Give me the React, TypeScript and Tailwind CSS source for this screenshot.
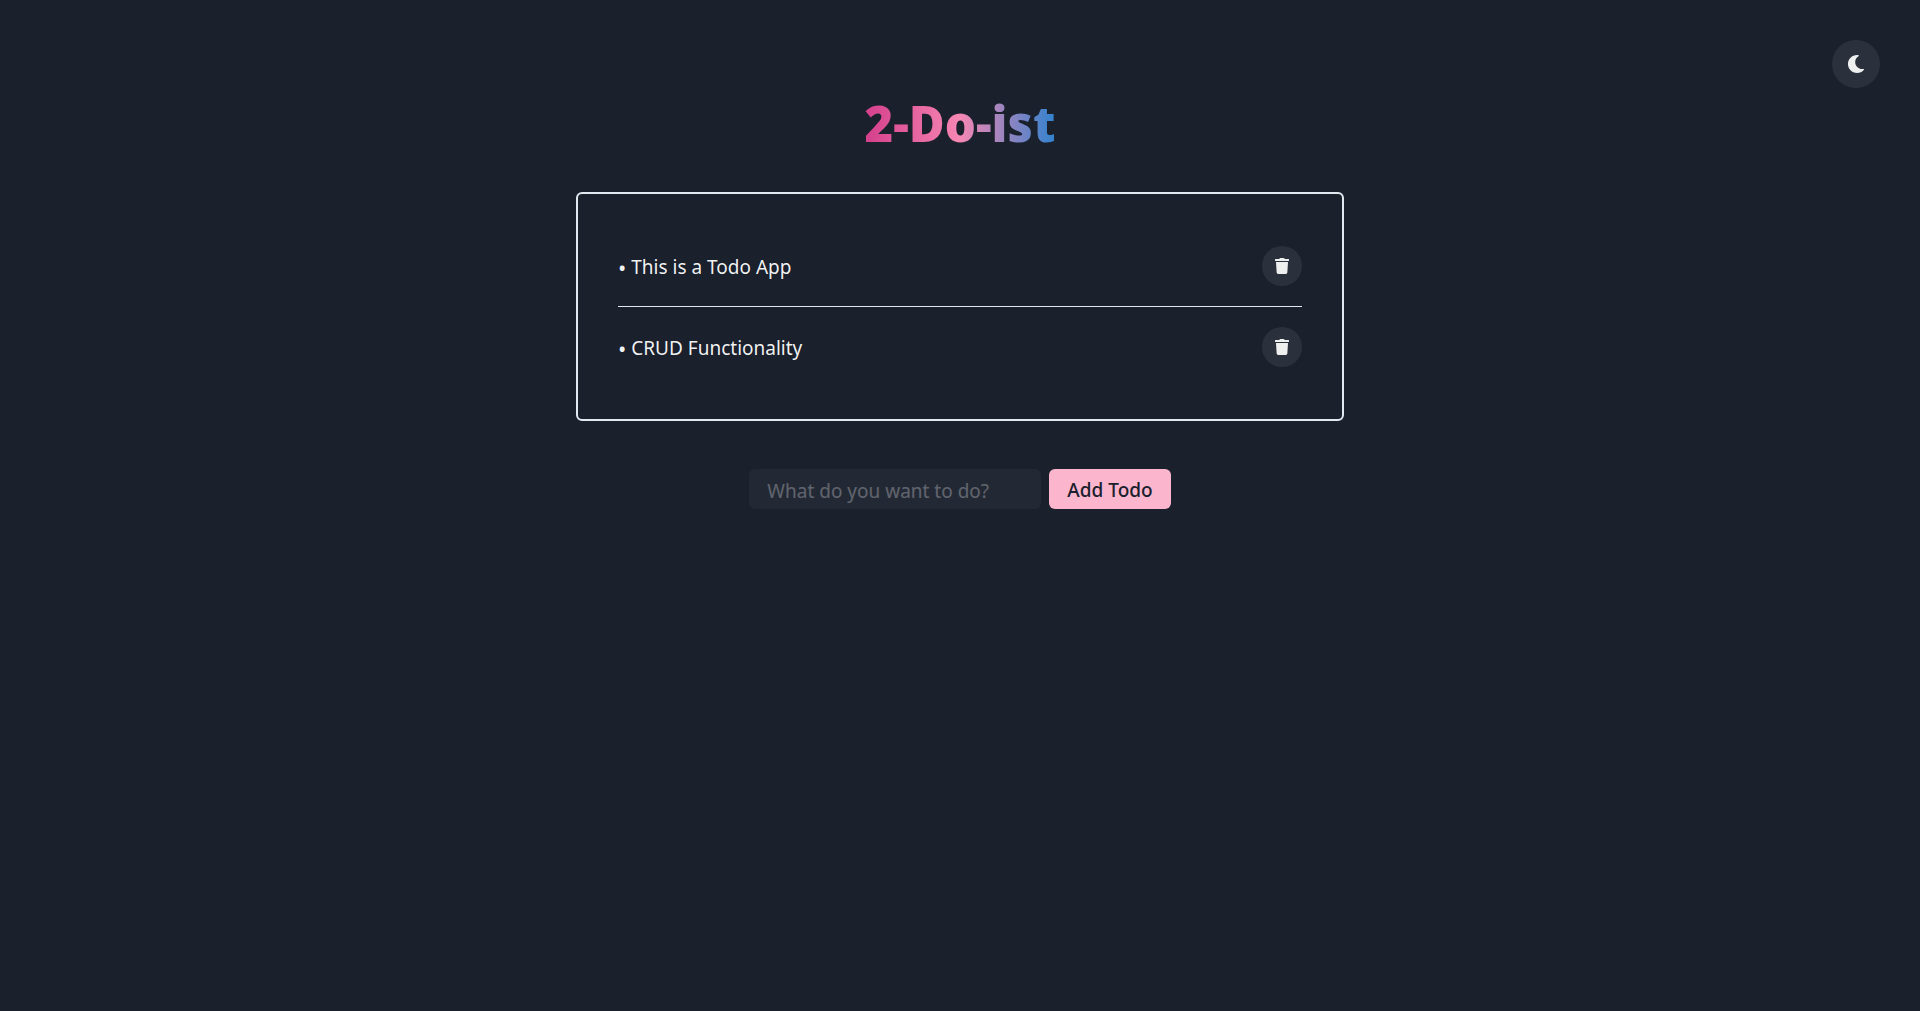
import { useState } from "react";
import type { FormEvent } from "react";
import { FaMoon, FaTrash } from "react-icons/fa";

interface Todo {
  id: number;
  body: string;
}

const initialTodos: Todo[] = [
  { id: 1, body: "This is a Todo App" },
  { id: 2, body: "CRUD Functionality" },
];

export default function App() {
  const [todos, setTodos] = useState<Todo[]>(initialTodos);
  const [content, setContent] = useState("");

  const addTodo = (e: FormEvent) => {
    e.preventDefault();
    if (!content.trim()) return;
    setTodos([...todos, { id: Date.now(), body: content }]);
    setContent("");
  };

  return (
    <main className="flex min-h-screen flex-col items-center bg-[#1a202c] p-10 font-['Noto_Sans',sans-serif] text-[19px] text-white/95">
      <button
        type="button"
        aria-label="Toggle colour mode"
        className="flex size-12 items-center justify-center self-end rounded-full bg-white/8 text-[18px] text-white/92"
      >
        <FaMoon />
      </button>
      <h1 className="mb-[34px] bg-linear-to-r/srgb from-[#d53f8c] via-[#f687b3] to-[#3182ce] bg-clip-text text-[49px] leading-[70px] font-black text-transparent">
        2-Do-ist
      </h1>
      <ul className="w-[40vw] min-w-80 divide-y divide-[#e2e8f0] rounded-md border-2 border-[#e2e8f0] px-10 py-8">
        {todos.map((todo) => (
          <li key={todo.id} className="flex items-center justify-between py-5">
            <span className="flex gap-[5px] pt-0.5">
              <span className="text-[22px] leading-7">•</span>
              <span className="leading-7">{todo.body}</span>
            </span>
            <button
              type="button"
              aria-label={`Delete ${todo.body}`}
              className="flex size-10 items-center justify-center rounded-full bg-white/8 text-base text-white/92"
              onClick={() => setTodos(todos.filter((t) => t.id !== todo.id))}
            >
              <FaTrash />
            </button>
          </li>
        ))}
      </ul>
      <form onSubmit={addTodo} className="mt-12 flex gap-2">
        <input
          aria-label="New todo"
          placeholder="What do you want to do?"
          value={content}
          onChange={(e) => setContent(e.target.value)}
          className="h-10 w-73 rounded-md bg-white/4 px-[18px] pt-1 placeholder:text-white/28"
        />
        <button
          type="submit"
          className="h-10 rounded-md bg-[#fbb6ce] px-[18px] pt-0.5 font-medium text-[#1a202c]"
        >
          Add Todo
        </button>
      </form>
    </main>
  );
}
